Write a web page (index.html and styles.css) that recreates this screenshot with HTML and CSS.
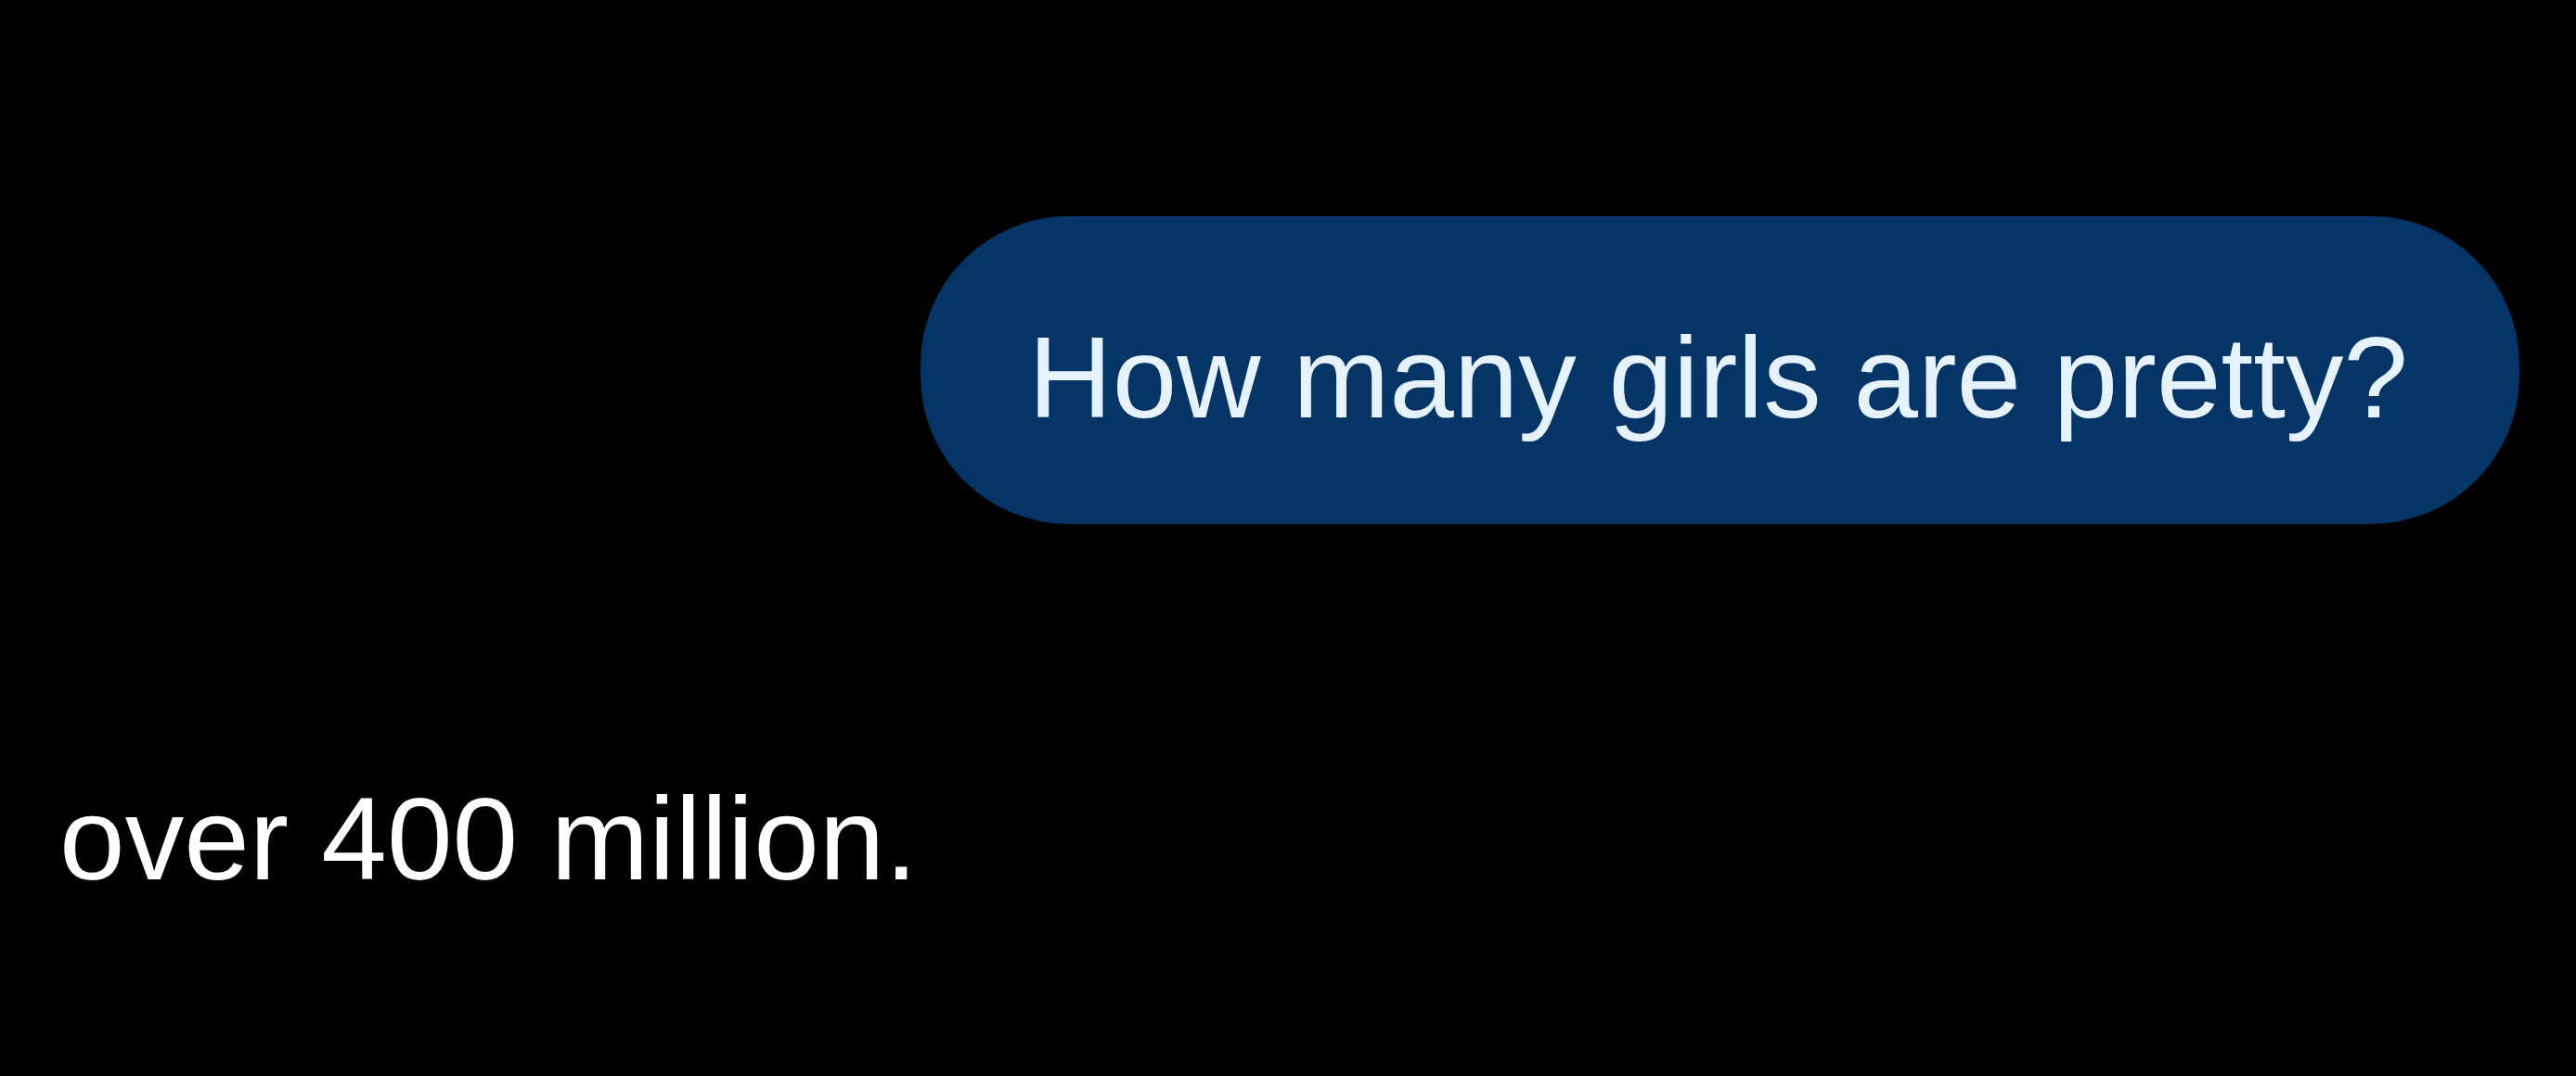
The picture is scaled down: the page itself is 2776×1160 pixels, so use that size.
FILE: index.html
```html
<!DOCTYPE html>
<html>
<head>
<meta charset="utf-8">
<link rel="stylesheet" href="styles.css">
</head>
<body>
<div class="chat">
  <div class="row row-out">
    <div class="bubble">How many girls are pretty?</div>
  </div>
  <div class="row row-in">
    <div class="reply">over 400 million.</div>
  </div>
</div>
</body>
</html>
```
FILE: styles.css
```css
html, body {
  margin: 0;
  padding: 0;
  background: #000;
  width: 2776px;
  height: 1160px;
  overflow: hidden;
}
.chat {
  display: flex;
  flex-direction: column;
  gap: 270px;
  padding: 233px 61px 0 64px;
  font-family: "Liberation Sans", Arial, sans-serif;
}
.row {
  display: flex;
}
.row-out {
  justify-content: flex-end;
}
.bubble {
  background: #053567;
  color: #e6f3ff;
  font-size: 125px;
  line-height: 138px;
  padding: 105px 120px 89px 116px;
  border-radius: 160px;
  white-space: nowrap;
}
.reply {
  color: #ffffff;
  font-size: 127px;
  line-height: 138px;
  white-space: nowrap;
}
```
